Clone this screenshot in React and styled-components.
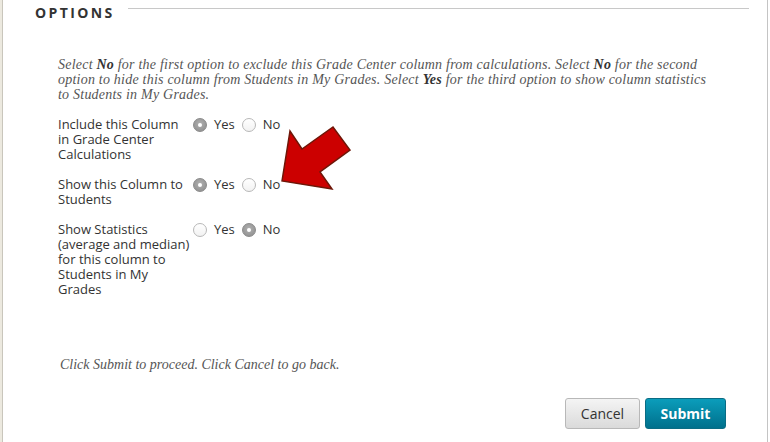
import React from 'react'
import styled, { createGlobalStyle } from 'styled-components'

const Global = createGlobalStyle`
  body {
    margin: 0;
    background: #fff;
  }
`

const Frame = styled.div`
  display: flex;
  width: 770px;
  height: 442px;
  overflow: hidden;
  position: relative;
`

const Rail = styled.div`
  width: 2px;
  background: #ece9df;
  border-right: 1px solid #c9c6bc;
`

const Main = styled.div`
  flex: 1;
  border-right: 1px solid #c4c4c4;
  margin-right: 2px;
  display: flex;
  flex-direction: column;
`

const Header = styled.div`
  display: flex;
  align-items: flex-start;
  padding: 5px 18px 0 32px;
`

const Title = styled.h2`
  margin: 0;
  font: 700 14px/16px 'Open Sans', sans-serif;
  letter-spacing: 2.4px;
  color: #333;
  margin-right: 13px;
`

const Rule = styled.div`
  flex: 1;
  height: 1px;
  background: #c8c8c8;
  margin-top: 3px;
`

const Instructions = styled.p`
  margin: 36px 0 0 55px;
  white-space: nowrap;
  font: italic 14px/15px 'Liberation Serif', Georgia, serif;
  letter-spacing: 0.22px;
  color: #555;
  b {
    color: #333;
  }
`

const Options = styled.div`
  display: flex;
  flex-direction: column;
  gap: 15px;
  margin: 15px 0 0 55px;
`

const Row = styled.div`
  display: grid;
  grid-template-columns: 135px auto;
  align-items: start;
`

const Label = styled.div`
  font: 13px/15px 'Open Sans', sans-serif;
  color: #333;
`

const Choices = styled.div`
  display: flex;
  align-items: center;
  gap: 7px;
  font: 13px/15px 'Open Sans', sans-serif;
  color: #333;
`

const Choice = styled.span`
  display: flex;
  align-items: center;
  gap: 7px;
`

const Radio = styled.span`
  width: 14px;
  height: 14px;
  box-sizing: border-box;
  border-radius: 50%;
  display: inline-flex;
  align-items: center;
  justify-content: center;
  border: 1px solid ${p => (p.checked ? '#8a8a8a' : '#b8b8b8')};
  background: ${p =>
    p.checked
      ? 'radial-gradient(circle at 50% 40%, #b0b0b0, #8c8c8c)'
      : 'linear-gradient(#fff, #f2f2f2)'};
  &::after {
    content: '';
    width: 4px;
    height: 4px;
    border-radius: 50%;
    background: ${p => (p.checked ? '#fff' : 'transparent')};
  }
`

const Footer = styled.p`
  margin: auto 0 0 57px;
  font: italic 14px/15px 'Liberation Serif', Georgia, serif;
  color: #555;
`

const Actions = styled.div`
  display: flex;
  justify-content: flex-end;
  gap: 5px;
  padding: 26px 41px 13px 0;
`

const Button = styled.button`
  height: 31px;
  border-radius: 3px;
  font: ${p => (p.primary ? 700 : 400)} 14px 'Open Sans', sans-serif;
  padding: 0;
  width: ${p => (p.primary ? '81px' : '75px')};
  color: ${p => (p.primary ? '#fff' : '#333')};
  border: 1px solid ${p => (p.primary ? '#0a6c84' : '#b8b8b8')};
  background: ${p =>
    p.primary
      ? 'linear-gradient(#0b9dbb, #00708c)'
      : 'linear-gradient(#f4f4f4, #dadada)'};
`

const Arrow = styled.svg`
  position: absolute;
  left: 0;
  top: 0;
  pointer-events: none;
`

const Option = ({ label, value }) => (
  <Row>
    <Label>{label}</Label>
    <Choices>
      <Choice>
        <Radio checked={value === 'yes'} />
        Yes
      </Choice>
      <Choice>
        <Radio checked={value === 'no'} />
        No
      </Choice>
    </Choices>
  </Row>
)

export default function App() {
  return (
    <Frame>
      <Global />
      <Rail />
      <Main>
        <Header>
          <Title>OPTIONS</Title>
          <Rule />
        </Header>
        <Instructions>
          Select <b>No</b> for the first option to exclude this Grade Center column from
          calculations. Select <b>No</b> for the second
          <br />
          option to hide this column from Students in My Grades. Select <b>Yes</b> for the
          third option to show column statistics
          <br />
          to Students in My Grades.
        </Instructions>
        <Options>
          <Option label="Include this Column in Grade Center Calculations" value="yes" />
          <Option label="Show this Column to Students" value="yes" />
          <Option
            label="Show Statistics (average and median) for this column to Students in My Grades"
            value="no"
          />
        </Options>
        <Footer>Click Submit to proceed. Click Cancel to go back.</Footer>
        <Actions>
          <Button>Cancel</Button>
          <Button primary>Submit</Button>
        </Actions>
      </Main>
      <Arrow width="770" height="442">
        <polygon
          points="282,181 290,131 302,149 333,127 350,150 320,172 332,189"
          fill="#cc0000"
          stroke="#6e1608"
          strokeWidth="1.5"
          strokeLinejoin="miter"
        />
      </Arrow>
    </Frame>
  )
}
